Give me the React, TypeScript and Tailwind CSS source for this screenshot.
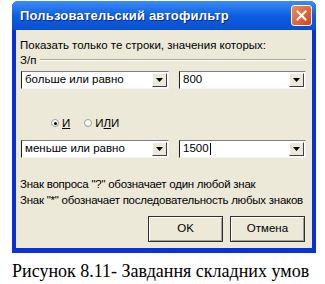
import type { ReactNode } from "react"

function Arrow() {
	return (
		<div className="flex h-full w-[15px] shrink-0 items-center justify-center border border-t-white border-l-white border-r-[#404040] border-b-[#404040] bg-[#ECE9D8]">
			<svg width="7" height="4" viewBox="0 0 7 4">
				<path d="M0 0h7L3.5 4z" fill="#000" />
			</svg>
		</div>
	)
}

function Combo(props: { value: ReactNode; className?: string }) {
	return (
		<div
			className={`flex h-[18px] items-stretch border border-t-[#808080] border-l-[#202020] border-r-[#f4f4f4] border-b-[#f4f4f4] bg-white p-px ${props.className ?? ""}`}
		>
			<div className="flex flex-1 items-center truncate pl-[2px] leading-none">{props.value}</div>
			<Arrow />
		</div>
	)
}

function Radio(props: { checked?: boolean; label: ReactNode }) {
	return (
		<div className="flex items-center gap-[3px]">
			<div className="flex size-[8px] items-center justify-center rounded-full border border-[#9a9a9a] bg-white">
				{props.checked && <div className="size-[3px] rounded-full bg-black" />}
			</div>
			<span>{props.label}</span>
		</div>
	)
}

function Button(props: { label: string }) {
	return (
		<div className="flex h-[26px] w-[75px] items-center justify-center border border-[#303030] bg-[#ECE9D8] shadow-[inset_1px_1px_0_#fff,inset_-1px_-1px_0_#a0a0a0]">
			{props.label}
		</div>
	)
}

export default function App() {
	return (
		<div className="h-[284px] w-[325px] overflow-hidden bg-white font-['Liberation_Sans']">
			<div className="ml-[12px] mt-[1px] flex h-[252px] w-[304px] flex-col rounded-t-[6px] bg-[#0831D9]">
				<div className="flex h-[29px] items-center justify-between rounded-t-[6px] bg-gradient-to-b from-[#3d8bf5] via-[#0b5fe0] to-[#0a4fd0] pl-[8px] pr-[4px]">
					<span className="text-[13px] font-bold tracking-[0.2px] text-white [text-shadow:1px_1px_0_#0a2a80]">
						Пользовательский автофильтр
					</span>
					<div className="flex size-[21px] items-center justify-center rounded-[3px] border border-white bg-gradient-to-br from-[#f08a5d] to-[#d2421a]">
						<svg width="11" height="11" viewBox="0 0 11 11">
							<path d="M1.5 1.5l8 8M9.5 1.5l-8 8" stroke="#fff" strokeWidth="2.2" strokeLinecap="round" />
						</svg>
					</div>
				</div>
				<div className="mx-[4px] mb-[5px] flex flex-1 flex-col whitespace-nowrap bg-[#ECE9D8] pl-[4px] pr-[6px] text-[11.5px] text-black">
					<div className="mt-[8px] leading-[14px]">Показать только те строки, значения которых:</div>
					<div className="mt-[1px] flex items-center gap-[4px] leading-[14px]">
						<span>З/п</span>
						<div className="h-[2px] flex-1 border-t border-b border-t-[#aca899] border-b-white" />
					</div>
					<div className="mt-[4px] flex justify-between pl-[1px]">
						<Combo value="больше или равно" className="w-[148px]" />
						<Combo value="800" className="w-[127px]" />
					</div>
					<div className="mt-[27px] flex gap-[14px] pl-[31px] leading-[14px]">
						<Radio checked label={<u>И</u>} />
						<Radio label={<>И<u>Л</u>И</>} />
					</div>
					<div className="mt-[10px] flex justify-between pl-[1px]">
						<Combo value="меньше или равно" className="w-[148px]" />
						<Combo
							value={
								<>
									1500
									<span className="ml-px inline-block h-[12px] w-px bg-black" />
								</>
							}
							className="w-[127px]"
						/>
					</div>
					<div className="mt-[18px] leading-[16px] tracking-[-0.25px]">Знак вопроса "?" обозначает один любой знак</div>
					<div className="leading-[16px] tracking-[-0.25px]">Знак "*" обозначает последовательность любых знаков</div>
					<div className="mt-[8px] flex justify-end gap-[7px] pr-[1px]">
						<Button label="OK" />
						<Button label="Отмена" />
					</div>
				</div>
			</div>
			<div className="mt-[8px] pl-[12px] font-['Liberation_Serif'] text-[18px] leading-[20px] text-black">
				Рисунок 8.11- Завдання складних умов
			</div>
		</div>
	)
}
